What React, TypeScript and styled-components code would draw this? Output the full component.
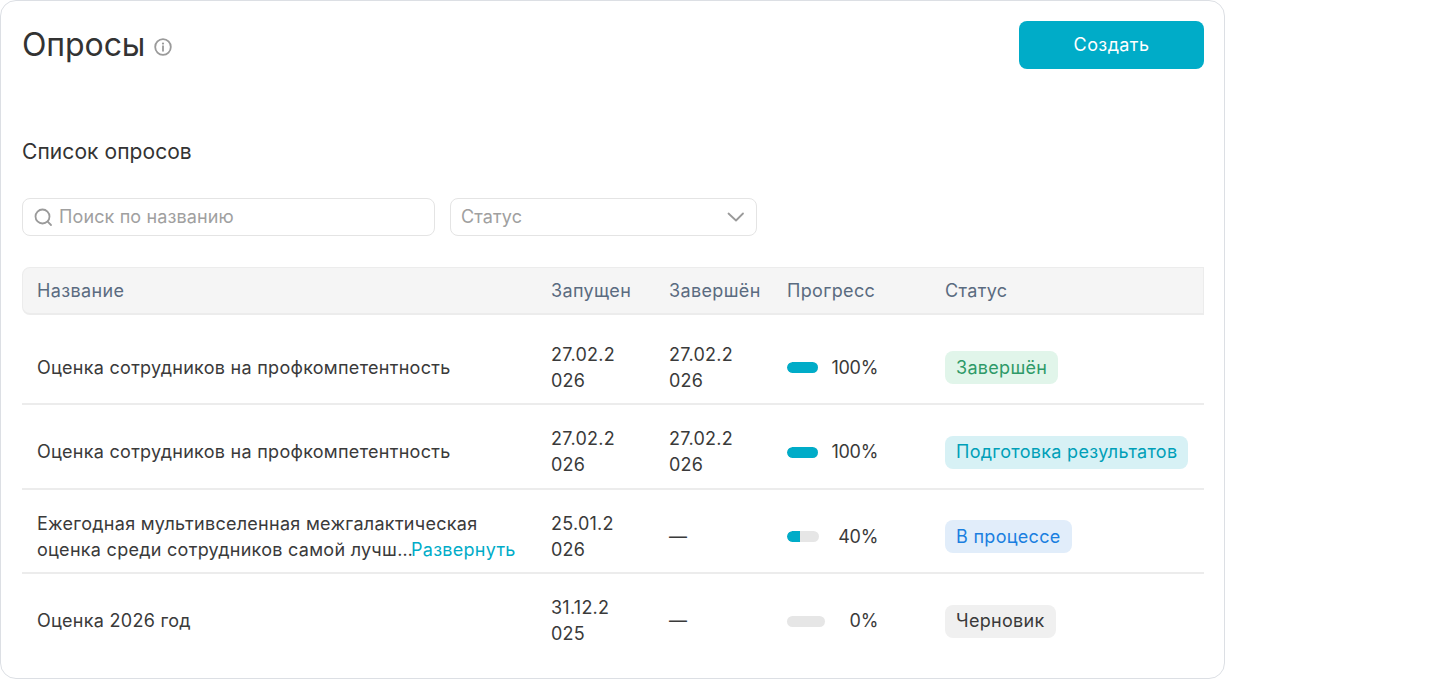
import React from "react";
import styled, { createGlobalStyle } from "styled-components";

const Global = createGlobalStyle`
  html, body { margin: 0; padding: 0; background: #fff; }
  body { font-family: Inter, "Noto Sans", sans-serif; color: #333; }
  * { box-sizing: border-box; }
`;

const Card = styled.div`
  width: 1225px;
  height: 679px;
  border: 1px solid #dcdfe4;
  border-radius: 16px;
  padding: 20px 20px 0 21px;
  background: #fff;
`;
const Header = styled.div`
  display: flex;
  justify-content: space-between;
  align-items: flex-start;
  height: 48px;
`;
const TitleWrap = styled.div`
  display: flex;
  align-items: center;
  gap: 9px;
  height: 48px;
`;
const Title = styled.h1`
  margin: 0;
  font-size: 32px;
  line-height: 48px;
  font-weight: 400;
  letter-spacing: -0.1px;
  color: #333;
`;
const CreateButton = styled.button`
  width: 185px;
  height: 48px;
  border: none;
  border-radius: 8px;
  background: #00acc8;
  color: #fff;
  font: 400 18px/26px Inter, sans-serif;
  letter-spacing: 0.4px;
`;
const SectionTitle = styled.h2`
  margin: 0;
  padding-top: 68px;
  font-size: 21px;
  line-height: 30px;
  font-weight: 400;
  letter-spacing: 0.07px;
  color: #333;
`;
const Filters = styled.div`
  display: flex;
  gap: 15px;
  margin-top: 31px;
`;
const Field = styled.div<{ $w: number }>`
  width: ${(p) => p.$w}px;
  height: 38px;
  border: 1px solid #e4e4e4;
  border-radius: 8px;
  display: flex;
  align-items: center;
  padding: 0 11px 0 10px;
  gap: 6px;
  font-size: 18px;
  line-height: 36px;
  letter-spacing: 0.12px;
  color: #a0a0a0;
`;
const FieldText = styled.span`
  flex: 1;
`;
const Table = styled.div`
  margin-top: 31px;
  width: 1182px;
`;
const HeadRow = styled.div`
  display: grid;
  grid-template-columns: 513px 118px 118px 158px 1fr;
  height: 48px;
  align-items: center;
  background: #f5f5f5;
  border: 1px solid #ececec;
  border-width: 1px 1px 2px 1px;
  border-radius: 8px 0 0 8px;
  color: #5a6b80;
  font-size: 18px;
  font-weight: 400;
  letter-spacing: 0.35px;
`;
const HeadCell = styled.div`
  padding-left: 15px;
  &:first-child { padding-left: 14px; }
`;
const Body = styled.div`
  padding-top: 5.5px;
`;
const Row = styled.div<{ $last?: boolean }>`
  display: grid;
  grid-template-columns: 514px 118px 118px 158px 1fr;
  height: 84.5px;
  padding-top: 12px;
  align-items: center;
  border-bottom: 2px solid ${(p) => (p.$last ? "transparent" : "#ececec")};
  font-size: 18px;
  line-height: 26px;
  letter-spacing: 0.25px;
  color: #3a3a3a;
`;
const NameCell = styled.div`
  padding-left: 15px;
  padding-right: 16px;
  letter-spacing: 0.28px;
`;
const More = styled.span`
  color: #00acc8;
  margin-left: -2px;
`;
const DateCell = styled.div`
  padding-left: 15px;
`;
const DateText = styled.div`
  width: 68px;
  word-break: break-all;
`;
const ProgressCell = styled.div`
  padding-left: 15px;
  display: flex;
  justify-content: space-between;
  align-items: center;
  width: 106px;
  letter-spacing: -0.3px;
`;
const Track = styled.div<{ $w: number }>`
  width: ${(p) => p.$w}px;
  height: 11px;
  border-radius: 6px;
  background: #e6e6e6;
  overflow: hidden;
`;
const Fill = styled.div`
  height: 100%;
  background: #00acc8;
  border-radius: 6px 0 0 6px;
`;
const StatusCell = styled.div`
  padding-left: 15px;
  display: flex;
`;
const tones = {
  done: ["#e1f5ea", "#2e9a68"],
  prep: ["#d7f1f5", "#009fb8"],
  progress: ["#e1edfa", "#1a7fe0"],
  draft: ["#f0f0f0", "#3a3a3a"],
} as const;
const Badge = styled.span<{ $tone: keyof typeof tones }>`
  height: 33px;
  padding: 0 11px;
  display: inline-flex;
  align-items: center;
  border-radius: 8px;
  white-space: nowrap;
  letter-spacing: 0.3px;
  background: ${(p) => tones[p.$tone][0]};
  color: ${(p) => tones[p.$tone][1]};
`;

const InfoIcon = () => (
  <svg width="18" height="18" viewBox="0 0 18 18" fill="none" style={{ marginTop: 4 }}>
    <circle cx="9" cy="9" r="7.8" stroke="#9a9a9a" strokeWidth="1.8" />
    <circle cx="9" cy="5.6" r="1.1" fill="#9a9a9a" />
    <path d="M9 8.2v4.6" stroke="#9a9a9a" strokeWidth="1.8" strokeLinecap="round" />
  </svg>
);
const SearchIcon = () => (
  <svg width="20" height="20" viewBox="0 0 20 20" fill="none">
    <circle cx="9.5" cy="9.5" r="7" stroke="#9a9a9a" strokeWidth="1.8" />
    <path d="M14.7 14.7L18 18" stroke="#9a9a9a" strokeWidth="1.8" strokeLinecap="round" />
  </svg>
);
const ChevronIcon = () => (
  <svg width="18" height="10" viewBox="0 0 18 10" fill="none">
    <path d="M1.5 1.5L9 8.5l7-7" stroke="#9a9a9a" strokeWidth="1.8" strokeLinecap="round" strokeLinejoin="round" />
  </svg>
);

type Rec = {
  name: React.ReactNode;
  start: string;
  end: string;
  pct: number;
  track: number;
  tone: keyof typeof tones;
  status: string;
};
const rows: Rec[] = [
  { name: "Оценка сотрудников на профкомпетентность", start: "27.02.2026", end: "27.02.2026", pct: 100, track: 31, tone: "done", status: "Завершён" },
  { name: "Оценка сотрудников на профкомпетентность", start: "27.02.2026", end: "27.02.2026", pct: 100, track: 31, tone: "prep", status: "Подготовка результатов" },
  { name: <>Ежегодная мультивселенная межгалактическая оценка среди сотрудников самой лучш…<More>Развернуть</More></>, start: "25.01.2026", end: "—", pct: 40, track: 32, tone: "progress", status: "В процессе" },
  { name: "Оценка 2026 год", start: "31.12.2025", end: "—", pct: 0, track: 38, tone: "draft", status: "Черновик" },
];

export default function App() {
  return (
    <>
      <Global />
      <Card>
        <Header>
          <TitleWrap>
            <Title>Опросы</Title>
            <InfoIcon />
          </TitleWrap>
          <CreateButton>Создать</CreateButton>
        </Header>
        <SectionTitle>Список опросов</SectionTitle>
        <Filters>
          <Field $w={413}>
            <SearchIcon />
            <FieldText>Поиск по названию</FieldText>
          </Field>
          <Field $w={307}>
            <FieldText>Статус</FieldText>
            <ChevronIcon />
          </Field>
        </Filters>
        <Table>
          <HeadRow>
            <HeadCell>Название</HeadCell>
            <HeadCell>Запущен</HeadCell>
            <HeadCell>Завершён</HeadCell>
            <HeadCell>Прогресс</HeadCell>
            <HeadCell>Статус</HeadCell>
          </HeadRow>
          <Body>
            {rows.map((r, i) => (
              <Row key={i} $last={i === rows.length - 1}>
                <NameCell>{r.name}</NameCell>
                <DateCell><DateText>{r.start}</DateText></DateCell>
                <DateCell><DateText>{r.end}</DateText></DateCell>
                <ProgressCell>
                  <Track $w={r.track}>
                    <Fill style={{ width: `${r.pct}%` }} />
                  </Track>
                  <span>{r.pct}%</span>
                </ProgressCell>
                <StatusCell>
                  <Badge $tone={r.tone}>{r.status}</Badge>
                </StatusCell>
              </Row>
            ))}
          </Body>
        </Table>
      </Card>
    </>
  );
}
